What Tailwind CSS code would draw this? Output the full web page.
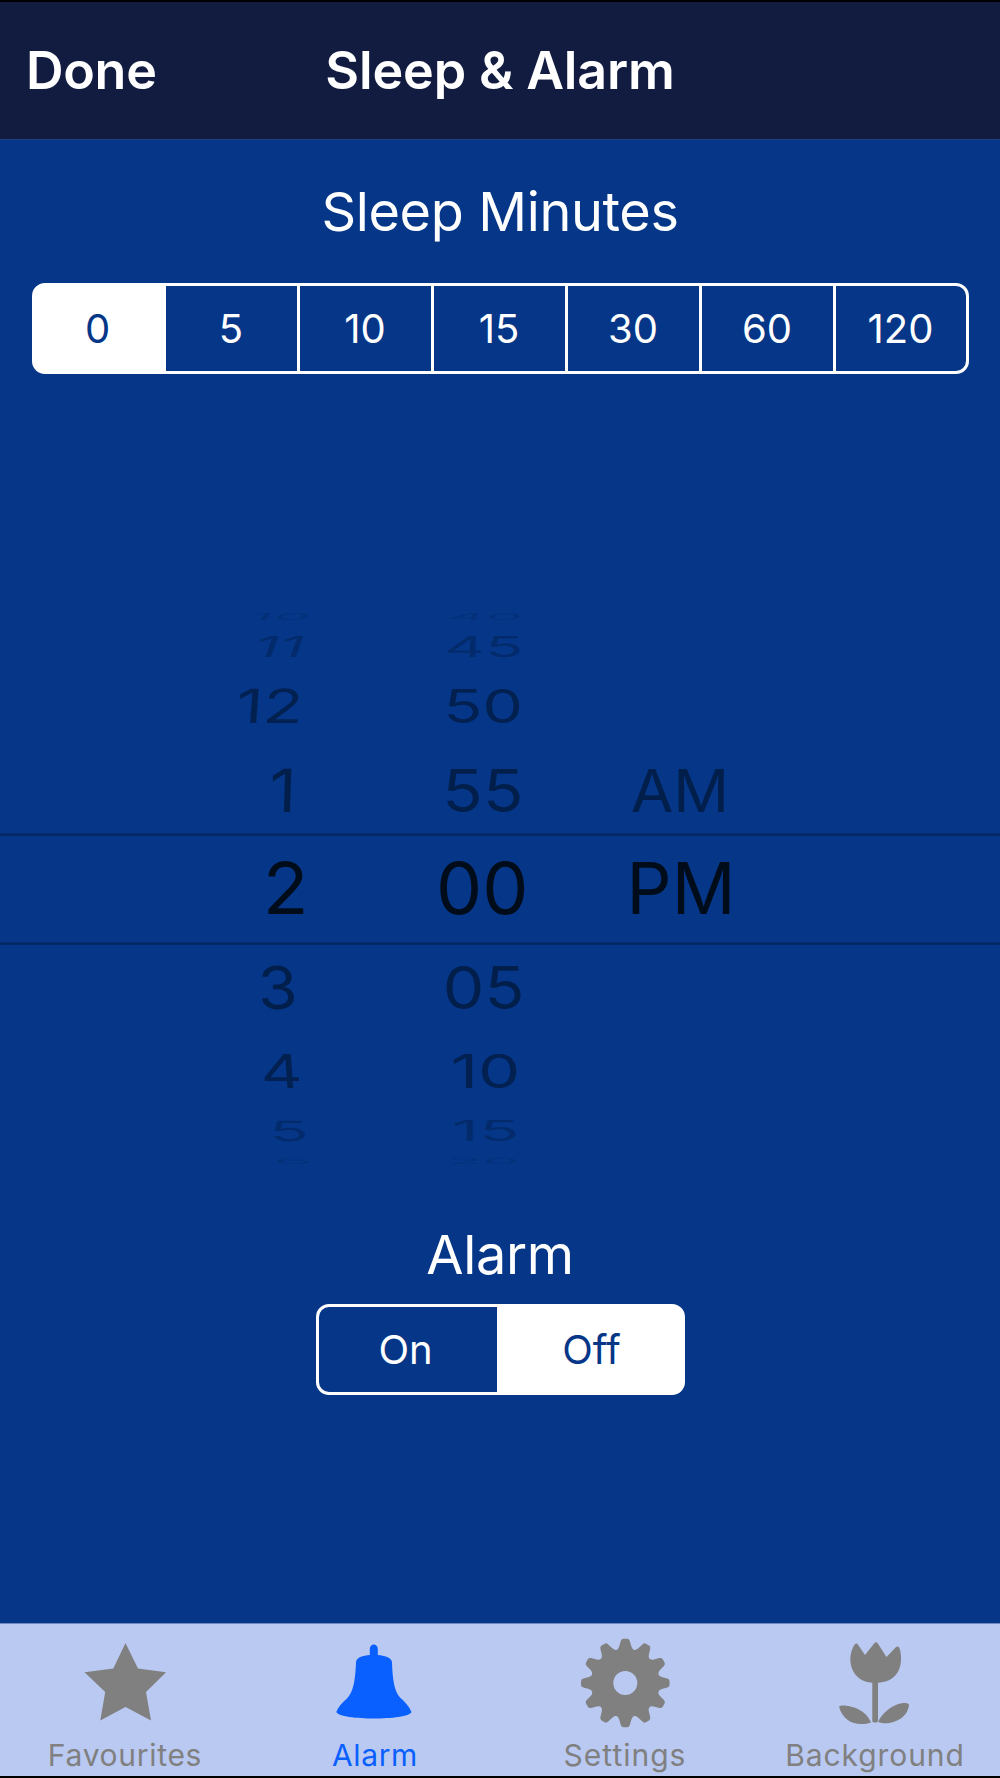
<!DOCTYPE html>
<html lang="en">
<head>
<meta charset="utf-8">
<title>Sleep &amp; Alarm</title>
<script src="https://cdn.jsdelivr.net/npm/@tailwindcss/browser@4"></script>
</head>
<body class="flex h-[1778px] w-[1000px] flex-col overflow-hidden bg-[#053688] font-['Inter',sans-serif] text-white">
  <header class="grid h-[140px] shrink-0 grid-cols-[1fr_auto_1fr] items-center border-t-2 border-b border-t-black border-b-[#1c3f7d] bg-[#111c40] px-[26px] text-[52px] leading-[60px] font-semibold">
    <button class="justify-self-start text-left tracking-[-0.3px]">Done</button>
    <h1 class="tracking-[-0.15px]">Sleep &amp; Alarm</h1>
  </header>

  <main class="flex h-[1483px] shrink-0 flex-col items-center">
    <h2 class="mt-[37px] h-[70px] text-[54px] leading-[70px] tracking-[-0.35px]">Sleep Minutes</h2>
    <div class="mt-9 flex h-[91px] w-[937px] overflow-hidden rounded-[13px] border-3 border-white bg-linear-to-r from-white from-[100px] to-transparent to-[100px] text-[40px]">
      <button class="w-[131px] bg-white pr-[5px] text-[#053688]">0</button>
      <button class="w-[134px] border-r-3">5</button>
      <button class="w-[134px] border-r-3">10</button>
      <button class="w-[134px] border-r-3">15</button>
      <button class="w-[134px] border-r-3">30</button>
      <button class="w-[134px] border-r-3">60</button>
      <button class="flex-1">120</button>
    </div>

    <!-- Time wheel: rows are foreshortened toward the top and bottom of the drum -->
    <svg class="mt-[206px] h-[620px] w-[1000px] shrink-0" viewBox="0 580 1000 620" font-size="72" fill="#000c1a">
      <g fill="#000" fill-opacity=".26"><rect y="833.3" width="1000" height="2.6"/><rect y="942.3" width="1000" height="2.6"/></g>
      <g id="wheel"></g>
    </svg>

    <h2 class="mt-[25px] h-[60px] text-[54px] leading-[60px] tracking-[-0.3px]">Alarm</h2>
    <div class="mt-[19px] flex h-[91px] w-[369px] overflow-hidden rounded-[13px] border-3 border-white bg-linear-to-r from-transparent from-[250px] to-white to-[250px] text-[40px]">
      <button class="w-[178px] pr-[4px]">On</button>
      <button class="flex-1 bg-white pl-[5px] text-[#053688]">Off</button>
    </div>
  </main>

  <nav class="grid h-[155px] shrink-0 grid-cols-4 border-t border-b-2 border-t-[#6d89bf] border-b-black bg-[#bac9f1] text-[30px] leading-9 text-[#808080]">
    <a class="flex flex-col items-center">
      <svg class="h-[113px] w-[250px]" viewBox="0 24 250 113" fill="currentColor"><path d="M125.500 43L138 68.500L166 72.300L146 92L151 120.500L125.500 107L100.300 120.500L105.200 92L84.500 72.300L113.300 68.500Z"/></svg>
      <span class="tracking-[0.7px]">Favourites</span>
    </a>
    <a class="flex flex-col items-center text-[#0a60ff]">
      <svg class="h-[113px] w-[250px]" viewBox="0 24 250 113" fill="currentColor"><path d="M119.800 55V49C119.800 43 127.800 43 127.800 49V55C134 55.500 142 57.500 142 62.500C142.500 78 144 91 150 97.500C155 102 159 106 161.500 112C160 116.500 141 118.500 124 118.500C107 118.500 88 116.500 86.300 112C88 107 92 103 97 98.500C104 91.500 105.300 78 106 62.500C106 57.500 113 55.500 119.800 55Z"/></svg>
      <span class="tracking-[0.6px]">Alarm</span>
    </a>
    <a class="flex flex-col items-center">
      <svg class="h-[113px] w-[250px]" viewBox="0 24 250 113" fill="currentColor">
        <circle cx="125.300" cy="83" r="23" fill="none" stroke="currentColor" stroke-width="22"/>
        <g id="teeth"></g>
      </svg>
      <span class="tracking-[1px]">Settings</span>
    </a>
    <a class="flex flex-col items-center">
      <svg class="h-[113px] w-[250px]" viewBox="0 24 250 113" fill="currentColor">
        <path d="M105.500 43.800Q107 43 108.200 45L115 55L124.500 43Q126 41.300 127.500 43L136.500 57L146 47Q148.500 45.500 149.800 49C153.500 63 150 81.500 128 82.800V121C128 123 122.300 123 122.300 121V82.800C102 81.500 96.500 61 102.800 48Q104 44.500 105.500 43.800Z"/>
        <path d="M89 106.500C91 103.500 115 106 121 122.500C107 127 93 122 89 106.500ZM128.300 122C133 109 153 99 159 104.500C158 120 139 126 128.300 122Z"/>
      </svg>
      <span class="tracking-[0.9px]">Background</span>
    </a>
  </nav>

<script>
  const NS = 'http://www.w3.org/2000/svg';
  // label, left, right, cap top, baseline, horizontal skew, opacity
  const rows = [
    ['10', 249, 305, 612.5, 619.5, -.9, .12], ['40', 450, 519, 612.5, 619.5, -.3, .12],
    ['11', 254, 296, 635.5, 656.5, -.35, .26], ['45', 448, 520, 635.5, 656.5, -.03, .26],
    ['12', 238, 297.5, 689, 723.3, -.07, .5], ['50', 448, 520, 689, 723.3, 0, .5],
    ['1', 271.5, 290, 769, 812.3, -.03, .55], ['55', 447, 520, 769, 812.3, 0, .55], ['AM', 631.5, 724, 769, 812.3, 0, .55],
    ['2', 268, 303.5, 862, 914, 0, 1], ['00', 440, 525, 862, 914, 0, 1], ['PM', 632.5, 729.5, 862, 914, 0, 1],
    ['3', 262, 295, 965.5, 1008.5, .03, .55], ['05', 446.5, 521, 965.5, 1008.5, 0, .55],
    ['4', 265, 300, 1054, 1088, .07, .5], ['10', 453.5, 517, 1054, 1088, 0, .5],
    ['5', 274.5, 306, 1121, 1141.3, .06, .26], ['15', 454.5, 516, 1121, 1141.3, 0, .26],
    ['6', 278, 310, 1158, 1164.3, .2, .12], ['20', 451.5, 517, 1158, 1164.3, .1, .12]
  ];
  const ctx = document.createElement('canvas').getContext('2d');
  ctx.font = '72px Inter';
  for (const [label, l, r, top, base, skew, alpha] of rows) {
    const m = ctx.measureText(label);
    const sx = (r - l) / (m.actualBoundingBoxRight + m.actualBoundingBoxLeft);
    const t = document.createElementNS(NS, 'text');
    t.textContent = label;
    t.setAttribute('transform', `matrix(${sx} 0 ${skew * (base - top) / 52} ${(base - top) / 52.4} ${l + m.actualBoundingBoxLeft * sx} ${base})`);
    t.setAttribute('fill-opacity', alpha);
    document.getElementById('wheel').append(t);
  }
  for (let i = 0; i < 12; i++) {
    const p = document.createElementNS(NS, 'path');
    p.setAttribute('d', 'M115.800 50.500Q118.300 49.500 119.200 46.500L120.800 41Q121.500 38.700 123.500 38.700H127.100Q129.100 38.700 129.800 41L131.400 46.500Q132.300 49.500 134.800 50.500V56H115.800Z');
    p.setAttribute('transform', `rotate(${i * 30} 125.300 83)`);
    document.getElementById('teeth').append(p);
  }
</script>
</body>
</html>
